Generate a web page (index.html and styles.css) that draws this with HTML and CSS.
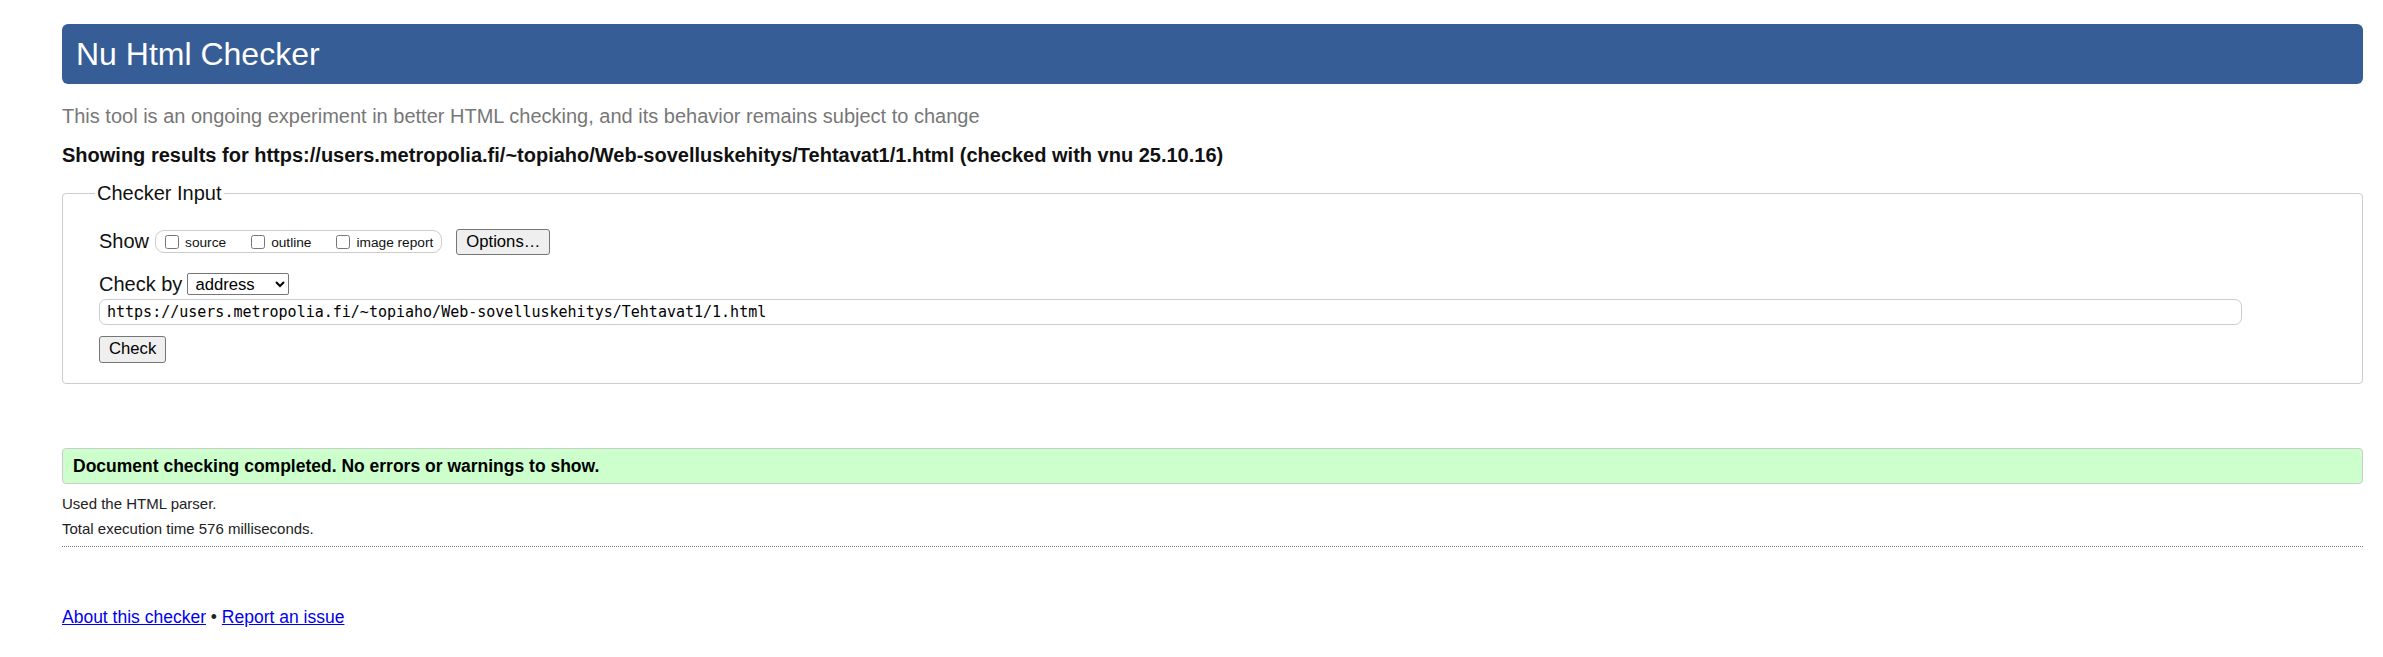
FILE: index.html
```html
<!DOCTYPE html>
<html lang="en">
<head>
<meta charset="utf-8">
<title>Showing results for https://users.metropolia.fi/~topiaho/Web-sovelluskehitys/Tehtavat1/1.html - Nu Html Checker</title>
<link rel="stylesheet" href="styles.css">
</head>
<body>
<h1 class="banner">Nu Html Checker</h1>
<p class="subtitle">This tool is an ongoing experiment in better HTML checking, and its behavior remains subject to change</p>
<p class="results-for">Showing results for https://users.metropolia.fi/~topiaho/Web-sovelluskehitys/Tehtavat1/1.html (checked with vnu 25.10.16)</p>
<form class="checker-form">
  <fieldset class="checker-input">
    <legend class="checker-legend">Checker Input</legend>
    <div class="checker-body">
      <div class="row show-row">
        <span class="row-label">Show</span>
        <div class="show-box">
          <label class="opt"><input type="checkbox" class="cb"><span>source</span></label>
          <label class="opt"><input type="checkbox" class="cb"><span>outline</span></label>
          <label class="opt"><input type="checkbox" class="cb"><span>image report</span></label>
        </div>
        <button type="button" class="btn">Options…</button>
      </div>
      <div class="row by-row">
        <span class="row-label">Check by</span>
        <select class="by-select"><option>address</option></select>
      </div>
      <input type="url" class="doc-input" value="https://users.metropolia.fi/~topiaho/Web-sovelluskehitys/Tehtavat1/1.html">
      <div class="submit-row"><button type="button" class="btn">Check</button></div>
    </div>
  </fieldset>
</form>
<p class="success">Document checking completed. No errors or warnings to show.</p>
<p class="stats first">Used the HTML parser.</p>
<p class="stats">Total execution time 576 milliseconds.</p>
<hr class="sep">
<p class="footer"><a href="#">About this checker</a> • <a href="#">Report an issue</a></p>
</body>
</html>
```
FILE: styles.css
```css
html, body {
  margin: 0;
  background: #fff;
}
body {
  padding: 0 20px 0 62px;
  font-family: "Liberation Sans", Arial, sans-serif;
  font-size: 20px;
  color: #111;
}
.banner {
  margin: 24px 0 0;
  padding: 12px 15px 11px 14px;
  font-size: 32px;
  line-height: 37px;
  font-weight: normal;
  background: #365d95;
  color: #fff;
  border-radius: 6px;
}
.subtitle {
  margin: 21px 0 0;
  line-height: 23px;
  color: #777;
}
.results-for {
  margin: 16px 0 0;
  line-height: 23px;
  font-weight: bold;
}
.checker-form {
  margin: 15px 0 0;
}
.checker-input {
  margin: 0;
  padding: 23.5px 0 20px 32px;
  border: 1px solid #ccc;
  border-radius: 4px;
}
.checker-legend {
  padding: 0 2px;
  line-height: 23px;
}
.checker-body {
  margin-left: 4px;
  display: flex;
  flex-direction: column;
  align-items: flex-start;
}
.row {
  display: flex;
  align-items: center;
}
.show-row {
  height: 26px;
}
.row-label {
  line-height: 23px;
  margin-right: 6px;
}
.show-box {
  display: flex;
  align-items: center;
  gap: 25px;
  height: 23px;
  box-sizing: border-box;
  padding: 0 8px 0 9px;
  border: 1px solid #ccc;
  border-radius: 9px;
  margin-right: 14px;
}
.opt {
  display: flex;
  align-items: center;
  gap: 6px;
  font-size: 13.7px;
  line-height: 15px;
  padding-top: 2px;
}
.cb {
  margin: 0 0 2px;
  width: 14px;
  height: 14px;
}
.btn {
  font-family: "Liberation Sans", Arial, sans-serif;
  font-size: 16.67px;
  color: #000;
  background: #efefef;
  border: 1px solid #767676;
  border-radius: 3px;
  padding: 0 9px;
  height: 26px;
}
.by-row {
  margin-top: 18px;
  height: 23px;
}
.by-select {
  font-family: "Liberation Sans", Arial, sans-serif;
  font-size: 16.67px;
  width: 102px;
  height: 22px;
  margin-left: -1px;
  padding: 0 0 0 3px;
  border: 1px solid #767676;
  border-radius: 2px;
  background: #fff;
  color: #000;
}
.doc-input {
  margin-top: 3px;
  width: calc(100% - 120px);
  height: 26px;
  box-sizing: border-box;
  padding: 0 7px;
  border: 1px solid #ccc;
  border-radius: 7px;
  font-family: "DejaVu Sans Mono", "Liberation Mono", monospace;
  font-size: 15px;
  color: #000;
  background: #fff;
}
.submit-row {
  margin-top: 11px;
}
.submit-row .btn {
  height: 27px;
}
.success {
  margin: 64px 0 0;
  padding: 7px 10px;
  line-height: 20px;
  font-size: 17.5px;
  font-weight: bold;
  color: #000;
  background: #ccffcc;
  border: 1px solid #ccc;
  border-radius: 4px;
}
.stats {
  margin: 8.5px 0 0;
  font-size: 15px;
  line-height: 17px;
  color: #222;
}
.stats.first {
  margin-top: 11px;
}
.sep {
  margin: 9px 0 0;
  border: 0;
  border-top: 1px dotted #777;
  height: 0;
}
.footer {
  margin: 60px 0 0;
  font-size: 17.5px;
  line-height: 20px;
  color: #222;
}
.footer a {
  color: #00e;
}
```
